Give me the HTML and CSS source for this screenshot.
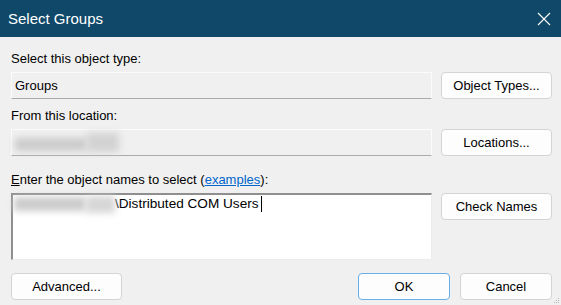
FILE: index.html
```html
<!DOCTYPE html>
<html>
<head>
    <title>Select Groups</title>
    <link rel="stylesheet" href="styles.css">
    <meta name="viewport" content="width=device-width, initial-scale=1.0">
</head>
<body>
    <div class="window">
        <div class="titlebar">
            <span class="title">Select Groups</span>
            <svg class="close" width="14" height="14" viewBox="0 0 14 14">
                <path d="M1 1 L13 13 M13 1 L1 13" stroke="#ffffff" stroke-width="1.1" fill="none" />
            </svg>
        </div>

        <div class="dialog">
            <div class="group group-first">
                <div class="label">Select this object type:</div>
                <div class="row">
                    <div class="field">Groups</div>
                    <button class="btn">Object Types...</button>
                </div>
            </div>

            <div class="group group-second">
                <div class="label">From this location:</div>
                <div class="row">
                    <div class="field">
                        <span class="smudge smudge-a"></span><span class="smudge smudge-b"></span>
                    </div>
                    <button class="btn">Locations...</button>
                </div>
            </div>

            <div class="group group-third">
                <div class="label"><u>E</u>nter the object names to select (<a href="#" class="link">examples</a>):</div>
                <div class="row row-tall">
                    <div class="names">
                        <span class="smudge smudge-c"></span><span class="smudge smudge-d"></span><span class="typed">\Distributed COM Users</span><span class="caret"></span>
                    </div>
                    <button class="btn">Check Names</button>
                </div>
            </div>

            <div class="footer">
                <button class="btn">Advanced...</button>
                <div class="actions">
                    <button class="btn btn-small btn-default">OK</button>
                    <button class="btn btn-small">Cancel</button>
                </div>
            </div>
        </div>

        <!-- size grip in the corner -->
        <svg class="grip" width="6" height="6" viewBox="0 0 6 6">
            <rect x="4" y="0" width="1" height="1" fill="#b8b8b8" />
            <rect x="2" y="2" width="1" height="1" fill="#b8b8b8" />
            <rect x="4" y="2" width="1" height="1" fill="#b8b8b8" />
            <rect x="0" y="4" width="1" height="1" fill="#b8b8b8" />
            <rect x="2" y="4" width="1" height="1" fill="#b8b8b8" />
            <rect x="4" y="4" width="1" height="1" fill="#b8b8b8" />
        </svg>
    </div>
</body>
</html>
```

FILE: styles.css
```css
html {
    font-family: "Liberation Sans", Arial, sans-serif;
}
body {
    margin: 0;
    background: #f0f0f0;
}

.window {
    position: relative;
    width: 561px;
    height: 305px;
    overflow: hidden;
    font-size: 13px;
    color: #000;
}

.titlebar {
    height: 37px;
    background: #0f4868;
    color: #fff;
    display: flex;
    align-items: center;
    justify-content: space-between;
    padding: 0 10px 0 8px;
}
.title {
    font-size: 15px;
}

.dialog {
    padding: 0 9px 0 11px;
}

.group-first {
    padding-top: 14px;
}
.group-second {
    padding-top: 9px;
}
.group-third {
    padding-top: 16px;
}

.label {
    line-height: 15px;
    margin-bottom: 6px;
}
.link {
    color: #0066cc;
}

.row {
    display: flex;
    gap: 9px;
    height: 27px;
}
.row-tall {
    height: 67px;
}

.field {
    flex: 1;
    box-sizing: border-box;
    border: 1px solid #fbfbfb;
    border-bottom-color: #ababab;
    background: #f0f0f0;
    padding: 0 3px;
    display: flex;
    align-items: center;
}

.names {
    flex: 1;
    box-sizing: border-box;
    background: #fff;
    border-top: 2px solid #8f8f8f;
    border-left: 2px solid #8f8f8f;
    border-right: 1px solid #ececec;
    border-bottom: 1px solid #ececec;
    padding: 0 0 0 1px;
    display: flex;
    align-items: flex-start;
    height: 67px;
}
.typed {
    font-size: 13.6px;
    line-height: 18px;
}
.caret {
    width: 1px;
    height: 16px;
    margin: 1px 0 0 2px;
    background: #000;
}

.smudge {
    display: inline-block;
    background: #cbcbcb;
    filter: blur(3.5px);
}
.smudge-a {
    width: 72px;
    height: 13px;
    margin-top: 3px;
}
.smudge-b {
    width: 32px;
    height: 19px;
    background: #d2d2d2;
}
.smudge-c {
    width: 72px;
    height: 14px;
    margin-top: 2px;
}
.smudge-d {
    width: 29px;
    height: 17px;
    background: #d6d6d6;
    margin-top: 1px;
}

.btn {
    width: 111px;
    height: 27px;
    flex: none;
    box-sizing: border-box;
    background: #fdfdfd;
    border: 1px solid #d4d4d4;
    border-radius: 4px;
    font-family: "Liberation Sans", Arial, sans-serif;
    font-size: 13px;
    color: #000;
    padding: 0;
}
.btn-small {
    width: 92px;
}
.btn-default {
    border-color: #6aaee6;
}

.footer {
    display: flex;
    justify-content: space-between;
    margin-top: 13px;
}
.actions {
    display: flex;
    gap: 10px;
}

.grip {
    position: absolute;
    right: 1px;
    bottom: 1px;
}
```
